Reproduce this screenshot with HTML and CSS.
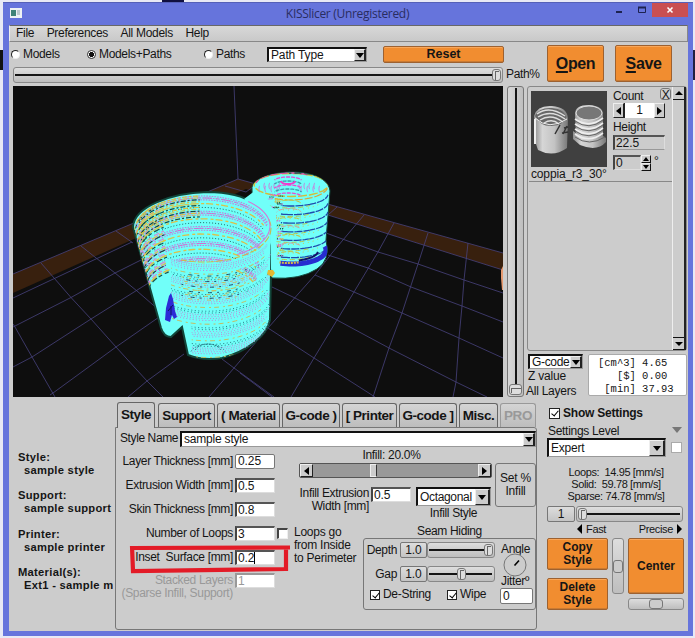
FILE: index.html
```html
<!DOCTYPE html>
<html lang="en">
<head>
<meta charset="utf-8">
<title>KISSlicer (Unregistered)</title>
<link rel="stylesheet" href="styles.css">
</head>
<body>
<div class="window">
  <header class="titlebar">
    <svg class="app-icon" width="12" height="10" viewBox="0 0 12 10"><rect width="12" height="10" fill="#eef2f4"/><rect x="1" y="2" width="5" height="6" fill="#3f8377"/><rect x="7" y="2" width="3" height="5" fill="#bcc8cc"/></svg>
    <span class="caption">KISSlicer (Unregistered)</span>
    <svg class="min" width="8" height="14"><path d="M0 9h6" stroke="#1d2350" stroke-width="2"/></svg>
    <svg class="max" width="9" height="14"><path d="M.5 4.500h7v5h-7z" fill="none" stroke="#1d2350"/><path d="M0 4.500h8" stroke="#1d2350" stroke-width="2"/></svg>
    <span class="close"><svg width="8" height="8"><path d="M1.500 1.500l5 5M6.500 1.500l-5 5" stroke="#fff" stroke-width="1.600"/></svg></span>
  </header>
  <div class="client">
    <nav class="menu"><span>File</span><span>Preferences</span><span>All Models</span><span>Help</span></nav>

    <div class="toolbar">
      <div class="view-tools">
        <div class="radios">
          <label class="r1"><i class="radio"></i>Models</label>
          <label class="r2"><i class="radio on"></i>Models+Paths</label>
          <label class="r3"><i class="radio"></i>Paths</label>
          <span class="select path-type"><b>Path Type</b><i class="drop"></i></span>
          <button class="orange reset">Reset</button>
        </div>
        <div class="path-row"><div class="track path-track"><i class="line"></i><i class="knob"></i></div><span>Path%</span></div>
      </div>
      <button class="orange big"><u>O</u>pen</button>
      <button class="orange big"><u>S</u>ave</button>
    </div>

    <div class="work">
      <svg class="viewport" width="490" height="311" viewBox="13 86 490 311">
        <defs>
          <clipPath id="big"><path d="M133 227C134 207 170 193 207 192Q238 192 255 204Q271 213 272 225L270 320C267 337 245 352 222 358Q203 361 188 355L182 327L171 337Q164 337 161 328Z"/></clipPath>
          <clipPath id="small"><path d="M252 189C251 180 268 173 290 172C315 172 329 180 330 191L326 240Q331 260 317 269Q300 280 272 278L253 240Z"/></clipPath>
        </defs>
        <rect x="13" y="86" width="490" height="311" fill="#0e0e0e"/>
        <path fill="#38200e" d="M13 274L238 179L503 253V270L246 189L13 293Z"/>
        <g class="grid">
          <path d="M234 86L238 179L13 274M238 179L503 253M13 298L132 242M13 327L71 297.5L115 273L145 258M13 367L32 357L91 319L150 282M50 395L53 393L116 347L162 315M128 397L147 381L184 354M209 397L234 368L268 328L299 293L315 275L332 253L364 215"/>
          <path d="M13 324L15 327L32 357L55 397M41 263L71 297.5L91 319L116 347L147 381L163 397M81 246L115 273L137 291L160 311M116 231L133 243M222 359L234 368L274 397M394 223L378 252L354 292L337 320L314 358L291 397M428 233L418 264L402 313L389 348L373 397M468 243L464 280L462 306L459 338L456 382L453 397M337 207L328 215"/>
          <path d="M328 215L503 270M326 233L378 252L418 264L464 280L503 293M328 255L368 268L411 287L462 306L503 322M315 275L354 292L402 313L459 338L503 358M272 287L295 298L337 320L389 348L456 382L487 397M268 328L314 358L375 397M240 373L272 397M225 186L246 192L257 184"/>
        </g>
        <path fill="#e69a70" d="M501 270l2-4v24h-1l-1-12z"/>
        <path d="M252 189C251 180 268 173 290 172C315 172 329 180 330 191L326 240Q331 260 317 269Q300 280 272 278L253 240Z" fill="#71fff9" stroke="#12463a"/>
        <g id="small-loops" clip-path="url(#small)"></g>
        <path d="M133 227C134 207 170 193 207 192Q238 192 255 204Q271 213 272 225L270 320C267 337 245 352 222 358Q203 361 188 355L182 327L171 337Q164 337 161 328Z" fill="#71fff9" stroke="#12463a" stroke-width="2"/>
        <path d="M244 199L256 190L276 212L277 268L271 270V225Z" fill="#71fff9"/>
        <g id="big-loops" clip-path="url(#big)"></g>
        <path d="M171 293l2 6 2 12 2 6-3 2-2-4-2 7-5-2 1-12 3-12z" fill="#2c2bd6"/><path d="M171 306v9M168 311l5-6" stroke="#0b1666"/>
        <path d="M268 270h5l2 3-3 4-5-3z" fill="#e2b832"/>
      </svg>

      <div class="track z-track"><i class="line"></i><i class="knob"></i></div>

      <aside class="side">
        <div class="models">
          <div class="model-card">
            <figure>
              <svg width="76" height="76" viewBox="0 0 76 76">
                <defs><linearGradient id="m"><stop stop-color="#8c8c8c"/><stop offset=".25" stop-color="#d6d6d6"/><stop offset=".6" stop-color="#c3c3c3"/><stop offset="1" stop-color="#777"/></linearGradient></defs>
                <rect width="76" height="76" fill="#404040"/>
                <path d="M3 25Q6 14 21 15Q36 16 37 27L36 57Q22 67 7 59L5 53H3z" fill="url(#m)"/>
                <path d="M4 25Q8 16 21 17Q34 18 35 27Q33 34 20 35Q9 35 4 25z" fill="#686868"/>
                <path d="M6 23Q18 14 34 25M7 26Q20 18 34 28M9 29Q20 22 32 31M13 32Q21 27 28 33" stroke="#dedede" fill="none" stroke-width="1.4"/>
                <path d="M4 27Q18 40 36 28" stroke="#eee" fill="none"/><path d="M24 43l5-9M32 43l4-8M33 37l4-1M31 42l6-1" stroke="#333" stroke-width="1.5"/><path d="M4 28v25" stroke="#eee" stroke-width="2"/>
                <path d="M44 23Q44 14 58 14Q72 15 72 23L72 45L75 47V51Q66 61 49 54L42 48V40l3 2z" fill="url(#m)"/>
                <ellipse cx="58" cy="22" rx="13" ry="7" fill="#777"/><ellipse cx="58" cy="22" rx="13" ry="7" fill="none" stroke="#ddd"/>
                <path d="M44 28Q58 38 72 27M44 33Q58 43 72 32M44 38Q58 48 72 37M44 43Q58 53 72 42" stroke="#eee" stroke-width="1.6" fill="none"/><path d="M44 30Q58 40 72 29M44 35Q58 45 72 34M44 40Q58 50 72 39M44 46Q58 56 74 46" stroke="#666" fill="none"/>
              </svg>
              <figcaption>coppia_r3_30°</figcaption>
            </figure>
            <div class="model-props">
              <div class="count-head">Count<span class="x">X</span></div>
              <div class="stepper"><i class="sq left"></i><b>1</b><i class="sq right"></i></div>
              <div class="height-label">Height</div>
              <div class="field dim h">22.5</div>
              <div class="rot"><span class="field dim">0</span><span class="ud"><i class="up"></i><i class="down"></i></span>°</div>
            </div>
          </div>
          <div class="vscroll"><i class="sb up"></i><i class="sb down"></i></div>
        </div>
        <div class="layer-info">
          <div class="layer-left"><span class="select gcode"><b>G-code</b><i class="drop"></i></span><span class="zv">Z value</span><span class="al">All Layers</span></div>
          <pre>[cm^3] 4.65
   [$] 0.00
 [min] 37.93</pre>
        </div>
      </aside>
    </div>

    <div class="settings">
      <dl class="summary">
        <dt>Style:</dt><dd>sample style</dd>
        <dt>Support:</dt><dd>sample support</dd>
        <dt>Printer:</dt><dd>sample printer</dd>
        <dt>Material(s):</dt><dd>Ext1 - sample ma</dd>
      </dl>

      <section class="tabset">
        <div class="tabs"><span class="t1 active">Style</span><span class="t2">Support</span><span class="t3">( Material</span><span class="t4">G-code )</span><span class="t5">[ Printer</span><span class="t6">G-code ]</span><span class="t7">Misc.</span><span class="t8 off">PRO</span></div>
        <div class="panel">
          <div class="name-row"><span>Style Name</span><span class="select style-name"><b>sample style</b><i class="drop"></i></span></div>
          <div class="panel-body">
            <div class="fields">
              <div class="row"><span>Layer Thickness [mm]</span><b class="field soft">0.25</b></div>
              <div class="row"><span>Extrusion Width [mm]</span><b class="field">0.5</b></div>
              <div class="row"><span>Skin Thickness [mm]</span><b class="field">0.8</b></div>
              <div class="row"><span>Number of Loops</span><b class="field">3</b><i class="check"></i></div>
              <div class="row inset"><span>Inset&nbsp; Surface [mm]</span><b class="field caret">0.2</b><svg class="mark" width="164" height="34"><path d="M162 4.500L3 5M4 3L5 28L158 26M158 5V28" fill="none" stroke="#e31b27" stroke-width="4.200"/></svg></div>
              <div class="row stacked"><span>Stacked Layers<br>(Sparse Infill, Support)</span><b class="field">1</b></div>
            </div>
            <div class="options">
              <div class="infill">
                <div class="infill-main">
                  <div class="infill-label">Infill: 20.0%</div>
                  <div class="hscroll"><i class="sq left"></i><i class="thumb"></i><i class="sq right"></i></div>
                  <div class="infill-row"><span class="iew">Infill Extrusion<br>Width [mm]</span><b class="field">0.5</b><span class="oct"><span class="select"><b>Octagonal</b><i class="drop"></i></span><em>Infill Style</em></span></div>
                </div>
                <button class="grey set">Set %<br>Infill</button>
              </div>
              <div class="lower">
                <div class="loops-go">Loops go<br>from Inside<br>to Perimeter</div>
                <div class="seam">
                  <div class="seam-title">Seam Hiding</div>
                  <div class="seam-box">
                    <div class="seam-left">
                      <div class="sl"><span>Depth</span><b class="val">1.0</b><div class="track depth"><i class="line"></i><i class="knob"></i></div></div>
                      <div class="sl"><span>Gap</span><b class="val">1.0</b><div class="track gap"><i class="line"></i><i class="knob"></i></div></div>
                      <div class="checks"><i class="check on"></i><span>De-String</span><i class="check on"></i><span>Wipe</span></div>
                    </div>
                    <div class="seam-right"><span>Angle</span><svg width="26" height="24"><circle cx="13" cy="12" r="11" fill="#ccc" stroke="#777"/><path d="M12.500 12.500l4.500-5" stroke="#000" stroke-width="1.600"/></svg><span>Jitterº</span><b class="field soft">0</b></div>
                  </div>
                </div>
              </div>
            </div>
          </div>
        </div>
      </section>

      <aside class="level">
        <div class="show"><i class="check on"></i>Show Settings</div>
        <div class="lv-head"><span>Settings Level</span><i></i></div>
        <div class="lv-row"><span class="select"><b>Expert</b><i class="drop"></i></span><i class="check flat"></i></div>
        <div class="speeds">Loops:&nbsp; 14.95 [mm/s]<br>Solid:&nbsp; 59.78 [mm/s]<br>Sparse: 74.78 [mm/s]</div>
        <div class="speed-row"><b class="val">1</b><div class="track"><i class="line"></i><i class="knob"></i></div></div>
        <div class="fp"><i class="tl"></i><span>Fast</span><span class="pr">Precise</span><i class="tr"></i></div>
        <div class="actions">
          <div class="col"><button class="orange">Copy<br>Style</button><button class="orange">Delete<br>Style</button></div>
          <div class="roll v"><i></i></div>
          <div class="col"><button class="orange center">Center</button><div class="roll h"><i></i></div></div>
        </div>
      </aside>
    </div>
  </div>
</div>
<script src="script.js"></script>
</body>
</html>
```
FILE: styles.css
```css
* { box-sizing: border-box; }
html { overflow: hidden; }
body {
  margin: 0; width: 695px; height: 638px; padding: 2px 2px 2px 3px; overflow: hidden; color: #151515;
  background:
    linear-gradient(#111, #111) 0 50px / 3px 20px no-repeat,
    linear-gradient(#101040, #101040) 162px 0 / 22px 2px no-repeat,
    linear-gradient(#202040, #202040) 693px 50px / 2px 30px no-repeat,
    #e8e9f5;
  font: 12px/13px "Liberation Sans", Arial, sans-serif; letter-spacing: -.33px; white-space: nowrap;
}
b, i, em { font-weight: normal; font-style: normal; display: block; }
.window { width: 690px; height: 634px; background: #6674dc; padding: 0 5px 0 6px; border-top: 1px solid #5560b8; }
.titlebar { height: 22px; display: flex; align-items: flex-start; }
.app-icon { margin: 5px 0 0 1px; }
.caption { width: 603px; margin-left: -1px; padding: 3px 0 0 50px; text-align: center; font: 12px/15px "Open Sans", sans-serif; letter-spacing: -.3px; color: #292d61; }
.caption + .min { margin-left: -8px; }
.max { margin-left: 14px; }
.close { width: 36px; height: 14px; margin-left: auto; background: #c94f52; display: flex; align-items: center; justify-content: center; }
.titlebar svg { flex: none; }
.client { height: 606px; background: #ccc; }
.menu { height: 17px; border: 1px solid #888; border-top-color: #686868; border-left-color: #eee; background: linear-gradient(#d8d8d8, #c9c9c9); padding-left: 6px; display: flex; gap: 12.5px; line-height: 15px; letter-spacing: -.3px; }

.toolbar { height: 44px; display: flex; align-items: flex-start; }
.view-tools { width: 538px; flex: none; }
.radios { display: flex; align-items: center; height: 24px; padding-top: 1px; }
.radios label { display: flex; align-items: center; gap: 3px; padding-left: 1px; }
.r1 { width: 76px; } .r2 { width: 117px; } .r3 { width: 57px; }
.radio { width: 9px; height: 9px; border-radius: 50%; background: #fff; border: 1px solid #222; border-right-color: #eee; border-bottom-color: #eee; margin-left: 1px; }
.radio.on { background: radial-gradient(#111 45%, #fff 55%); border: 1px solid #333; }
.select { display: flex; justify-content: space-between; background: #fff; border: 1px solid #333; border-width: 2px 1px 1px 2px; border-color: #111 #999 #999 #111; height: 16px; padding-left: 3px; line-height: 13px; }
.drop { width: 12px; background: #ccc; border: 1px solid #eee; border-right: 2px solid #222; border-bottom: 1px solid #222; display: flex; align-items: center; justify-content: center; }
.drop::before { content: ""; border: 4px solid transparent; border-top: 5px solid #000; border-bottom: 0; }
.path-type { width: 100px; margin-left: 8px; height: 15px; line-height: 12px; padding-left: 2px; letter-spacing: -.15px; }
button { font: bold 12px/13px "Liberation Sans", Arial, sans-serif; padding: 0; color: #151515; }
.orange { background: #f18d30; border: 1px solid #9d6130; border-radius: 2px; box-shadow: inset 0 1px #f9a75a, inset 0 -1px #c97a32; }
.reset { width: 121px; height: 17px; margin-left: 16px; font-size: 12.5px; }
.path-row { display: flex; align-items: center; height: 17px; gap: 3px; padding-left: 4px; }
.track { position: relative; height: 16px; border: 1px solid #888; border-radius: 3px; background: linear-gradient(#dedede, #bdbdbd); flex: none; }
.track .line { position: absolute; left: 1px; right: 2px; top: 6px; height: 2px; background: #151515; }
.track .knob { position: absolute; top: 1px; width: 9px; height: 12px; border: 1px solid #777; border-radius: 3px; background: #ddd; }
.track .knob::after { content: ""; position: absolute; left: 2px; top: 1px; width: 3px; height: 8px; border: 1px solid #666; border-width: 1px 0 0 1px; }
.path-track { width: 490px; }
.path-track .knob { right: 1px; }
.big { width: 57px; height: 37px; margin-top: 3px; font-size: 16px; letter-spacing: -.4px; flex: none; }
.big + .big { margin-left: 11px; }
.big u { text-decoration-thickness: 2px; text-underline-offset: 2px; }

.work { display: flex; height: 312px; padding-left: 4px; }
.viewport { flex: none; display: block; }
.grid path { fill: none; stroke: #47427d; stroke-width: .8; }
.work .z-track { width: 17px; height: 311px; margin: 0 3px 0 4px; border-color: #777; background: linear-gradient(90deg, #d8d8d8, #bebebe); }
.z-track .line { left: 7px; right: auto; width: 2px; top: 1px; bottom: 10px; height: auto; }
.z-track .knob { top: auto; bottom: 1px; left: 1px; width: 13px; height: 11px; }
.z-track .knob::after { width: 9px; height: 4px; left: 1px; top: 3px; }
.side { width: 160px; flex: none; }
.models { height: 265px; border: 1px solid #888; border-radius: 3px; display: flex; justify-content: space-between; padding-left: 1px; }
.model-card { width: 143px; height: 95px; border-bottom: 1px solid #888; display: flex; padding: 4px 0 0 2px; }
figure { margin: 0; width: 82px; }
figure svg { display: block; }
figcaption { line-height: 15px; letter-spacing: -.15px; }
.count-head { display: flex; height: 12px; width: 58px; justify-content: space-between; line-height: 11px; }
.x { width: 11px; height: 12px; margin: -3px 0 0; border: 1px solid #777; border-radius: 3px; text-align: center; line-height: 12px; }
.stepper { display: flex; width: 52px; height: 15px; }
.stepper b { flex: 1; background: #fff; text-align: center; line-height: 15px; border-left: 1px solid #222; }
.sq { width: 11px; flex: none; border: 1px solid #eee; border-right-color: #222; border-bottom-color: #222; background: #ccc; display: flex; align-items: center; justify-content: center; }
.sq::before { content: ""; border: 4px solid transparent; }
.sq.left::before { border-right: 5px solid #000; border-left: 0; }
.sq.right::before { border-left: 5px solid #000; border-right: 0; }
.height-label { line-height: 16px; margin-top: 1px; letter-spacing: -.3px; }
.field { background: #fff; border: 1px solid #ddd; border-top: 2px solid #555; border-left: 2px solid #444; width: 40px; height: 15px; line-height: 12px; padding-left: 1px; flex: none; letter-spacing: -.1px; }
.field.soft { border: 1px solid #777; border-radius: 2px; padding-left: 2px; line-height: 13px; }
.field.dim { background: #ccc; }
.field.h { width: 52px; border-bottom-color: #999; }
.rot { display: flex; margin-top: 5px; }
.rot .field { width: 28px; }
.ud { width: 10px; height: 16px; display: flex; flex-direction: column; margin-right: 3px; }
.ud i { flex: 1; border: 1px solid #eee; border-right-color: #111; border-bottom-color: #111; display: flex; align-items: center; justify-content: center; }
.up::before { content: ""; border: 3px solid transparent; border-bottom: 4px solid #000; border-top: 0; }
.down::before { content: ""; border: 3px solid transparent; border-top: 4px solid #000; border-bottom: 0; }
.vscroll { width: 14px; border-left: 1px solid #eee; border-right: 2px solid #222; display: flex; flex-direction: column; justify-content: space-between; }
.sb { height: 13px; border-bottom: 1px solid #111; display: flex; align-items: center; justify-content: center; }
.sb.down { border-top: 1px solid #111; }
.sb::before { border-left-width: 4px; border-right-width: 4px; }
.layer-info { display: flex; justify-content: space-between; margin-top: 3px; height: 43px; }
.layer-left { width: 60px; display: flex; flex-direction: column; }
.gcode { width: 55px; height: 15px; margin: 0 0 1px 1px; line-height: 12px; padding-left: 2px; }
.zv { line-height: 13px; padding-left: 1px; letter-spacing: -.2px; } .al { line-height: 16px; margin-left: -1px; letter-spacing: -.25px; }
pre { margin: 0; width: 99px; height: 42px; border: 1px solid #aaa; border-radius: 2px; background: #fff; padding: 2px 0 0 9px; font: 10.5px/13px "Liberation Mono", monospace; letter-spacing: 0; }

.settings { display: flex; height: 232px; }
.summary { width: 104px; margin: 0; padding: 53px 0 0 9px; overflow: hidden; font-weight: bold; font-size: 11.2px; letter-spacing: .28px; height: 232px; }
.summary dd { margin: 0 0 12.4px 6px; }
.tabset { width: 424px; flex: none; padding: 4px 0 0 2px; }
.tabs { display: flex; height: 25px; padding-left: 2px; font-weight: bold; font-size: 13.5px; letter-spacing: -.45px; align-items: flex-end; }
.tabs span { height: 24px; border: 1px solid #666; border-bottom: 0; border-radius: 3px 3px 0 0; background: linear-gradient(#d4d4d4, #bdbdbd); text-align: center; line-height: 24px; flex: none; }
.tabs .active { height: 26px; margin-bottom: -1px; background: #ccc; position: relative; }
.tabs .off { color: #999; border-color: #999; }
.t1 { width: 38px; } .t2 { width: 57px; margin-left: 3px; } .t3 { width: 63px; margin-left: 2px; } .t4 { width: 58px; margin-left: 2px; } .t5 { width: 55px; margin-left: 2px; } .t6 { width: 58px; margin-left: 2px; } .t7 { width: 39px; margin-left: 2px; } .t8 { width: 36px; margin-left: 2px; }
.panel { height: 203px; border: 1px solid #777; border-radius: 0 3px 3px 3px; padding-top: 2px; }
.name-row { display: flex; align-items: center; gap: 3px; padding-left: 4px; height: 17px; }
.style-name { width: 356px; line-height: 12px; padding-left: 2px; letter-spacing: -.2px; }
.name-row > span:first-child { width: 57px; letter-spacing: -.4px; }
.panel-body { display: flex; padding-top: 2px; }
.fields { width: 176px; flex: none; }
.row { display: flex; height: 24px; align-items: center; position: relative; }
.row > span { width: 117px; margin-right: 2px; text-align: right; }
.check { width: 11px; height: 11px; flex: none; background: #fff; border: 1px solid #eee; border-top: 2px solid #444; border-left: 2px solid #444; }
.row .check { margin-left: 2px; }
.check.on { position: relative; border: 1px solid #222; }
.check.on::after { content: ""; position: absolute; left: 3px; top: 0; width: 3px; height: 6px; border: solid #000; border-width: 0 1.5px 1.5px 0; transform: rotate(40deg); }
.check.flat { border: 1px solid #aaa; }
.caret::after { content: ""; display: inline-block; width: 1px; height: 12px; background: #000; vertical-align: -2px; }
.mark { position: absolute; left: 12px; top: -2px; }
.stacked { color: #999; height: 34px; align-items: flex-start; padding-top: 5px; }
.stacked .field { margin-top: -1px; border-color: #999 #ddd #ddd #999; }
.options { width: 244px; flex: none; padding-top: 1px; }
.infill { display: flex; height: 71px; padding-left: 7px; gap: 3px; }
.infill-main { width: 193px; flex: none; }
.infill-label { text-align: center; padding-right: 8px; height: 13px; line-height: 11px; letter-spacing: -.3px; }
.hscroll { height: 15px; background: #999; border: 1px solid #555; border-radius: 2px; display: flex; justify-content: space-between; }
.hscroll .sq { width: 13px; }
.thumb { width: 7px; margin-right: 101px; margin-left: auto; background: #ccc; border: 1px solid #eee; border-right-color: #333; }
.infill-row { display: flex; margin-top: 9px; align-items: flex-start; }
.iew { width: 70px; text-align: right; margin-right: 2px; }
.oct { margin-left: 5px; width: 75px; }
.oct .select { height: 19px; line-height: 16px; padding-left: 2px; }
.oct .drop { width: 15px; }
.oct em { text-align: center; line-height: 14px; }
.grey { background: #ccc; border: 1px solid #777; border-radius: 3px; font-weight: normal; letter-spacing: -.2px; }
.set { width: 41px; height: 44px; margin-top: 13px; }
.lower { display: flex; justify-content: space-between; }
.loops-go { padding: 5px 0 0 2px; letter-spacing: -.25px; }
.seam { width: 173px; margin-top: 3px; }
.seam-title { text-align: center; line-height: 14px; letter-spacing: -.35px; }
.seam-box { height: 72px; border: 1px solid #777; border-radius: 3px; display: flex; }
.seam-left { width: 133px; padding-top: 3px; flex: none; }
.sl { height: 16px; margin-bottom: 8px; display: flex; align-items: center; }
.sl > span { width: 33px; text-align: right; margin-right: 3px; }
.val { width: 27px; height: 16px; border: 1px solid #777; border-radius: 2px; text-align: center; line-height: 14px; letter-spacing: -.1px; background: linear-gradient(#ddd, #c4c4c4); flex: none; }
.sl .track { width: 68px; }
.depth .knob { right: 1px; } .gap .knob { left: 29px; }
.checks { display: flex; align-items: center; margin-top: -2px; padding-left: 6px; }
.checks .check { width: 10px; height: 10px; }
.checks span { width: 48px; margin-left: 3px; letter-spacing: -.3px; } .checks span + .check { margin-left: 16px; } .checks span:last-child { width: auto; }
.seam-right { padding: 4px 0 0 1px; display: flex; flex-direction: column; align-items: flex-start; width: 36px; flex: none; }
.seam-right > svg { margin: -2px 0 -2px 4px; flex: none; }
.seam-right > span { margin-left: 3px; line-height: 12px; flex: none; }
.seam-right .field { width: 33px; height: 16px; margin-top: 1px; margin-left: 2px; line-height: 14px; }

.level { width: 138px; flex: none; margin-left: 10px; }
.show { display: flex; align-items: center; gap: 3px; font-weight: bold; height: 21px; padding: 10px 0 0 2px; letter-spacing: -.22px; }
.lv-head { display: flex; justify-content: space-between; align-items: center; height: 19px; padding: 5px 3px 0 1px; letter-spacing: -.3px; }
.lv-head i { border: 5px solid transparent; border-top: 6px solid #777; border-bottom: 0; margin-top: -2px; }
.lv-row { display: flex; align-items: center; justify-content: space-between; padding-right: 3px; }
.lv-row .select { width: 119px; height: 19px; line-height: 16px; padding-left: 2px; letter-spacing: -.2px; }
.lv-row .drop { width: 16px; }
.speeds { text-align: center; font-size: 11px; line-height: 12px; margin-top: 9px; height: 36px; letter-spacing: -.38px; }
.speed-row { display: flex; gap: 1px; margin-top: 4px; }
.speed-row .val { width: 28px; } .speed-row .track { width: 107px; }
.speed-row .knob { left: 1px; }
.fp { display: flex; align-items: center; height: 14px; padding: 0 3px 0 30px; gap: 4px; font-size: 11px; margin-bottom: 2px; }
.fp .pr { margin-left: auto; }
.tl { border: 5px solid transparent; border-right-color: #000; border-left: 0; } .tr { border: 5px solid transparent; border-left-color: #000; border-right: 0; }
.actions { display: flex; gap: 4px; }
.col { display: flex; flex-direction: column; gap: 8px; }
.col .orange { width: 61px; height: 32px; }
.col .center { width: 56px; height: 56px; }
.col:last-child { gap: 4px; }
.roll { border: 1px solid #888; border-radius: 3px; background: linear-gradient(#ddd, #bebebe); display: flex; align-items: center; justify-content: center; }
.roll i { width: 10px; height: 13px; border: 1px solid #777; border-radius: 3px; background: #ccc; }
.roll.v { width: 12px; height: 56px; } .roll.h { width: 56px; height: 12px; } .roll.h i { width: 14px; height: 10px; }
```
FILE: script.js
```js
// Draws the extruder loops of both models as dashed elliptical arcs.
let seed = 7;
const rnd = () => (seed = (seed * 16807) % 2147483647) / 2147483647;
const NS = "http://www.w3.org/2000/svg";

function arc(parent, cx, cy, rx, ry, from, to, color, dash, width) {
  const p = document.createElementNS(NS, "path");
  let d = "";
  for (let i = 0; i <= 24; i++) {
    const a = (from + (to - from) * i / 24) * Math.PI / 180;
    d += (i ? "L" : "M") + (cx + rx * Math.cos(a)).toFixed(1) + " " + (cy - ry * Math.sin(a)).toFixed(1);
  }
  p.setAttribute("d", d);
  p.setAttribute("fill", "none");
  p.setAttribute("stroke", color);
  p.setAttribute("stroke-width", width || 1);
  p.setAttribute("stroke-dashoffset", (rnd() * 9).toFixed(1));
  if (dash) p.setAttribute("stroke-dasharray", dash);
  parent.appendChild(p);
}

const big = document.getElementById("big-loops");
// inner wall, in bands of equal tint
for (let k = 0; k < 38; k++) {
  const y = 230 + k * 1.7, rx = 67 - k * 0.35, ry = 34 - k * 0.2;
  const phase = k % 8;
  if (phase < 3) arc(big, 202, y, rx, ry, 172, 12, "#c579dc", "1.5 1.2", 1.1);
  else if (phase === 4) arc(big, 202, y, rx, ry, 178, 20, "#dcc04a", "7 3 3 2", 1.3);
  else if (phase === 6) arc(big, 202, y, rx, ry, 178, 20, "#1f6b66", "1 2", 1);
  if (phase === 1) arc(big, 202, y, rx, ry, 160, 25, "#cf70d4", "9 4 3 3", 1);
  arc(big, 202, y, rx, ry, 180, 128, ["#dcc546", "#1b5147", "#71fff9", "#d68ad0"][k % 4], "6 2 4 3", 1.2);
  if (k < 12) arc(big, 202, y, rx, ry, 165, 92, ["#e0bf3c", "#cfc95a", "#164c42"][k % 3], "5 2 2 2", 1.2);
}
// the front wall hides the lower inner loops
for (let k = 0; k < 9; k++) arc(big, 204, 232 + k, 66, 33, -3, -125, "#71fff9", "", 2);
arc(big, 204, 228, 67, 34, 15, -110, "#cdbc4c", "7 2", 1.1);
arc(big, 204, 226, 66, 33, 48, -60, "#d17bd6", "", 1.1);
for (let k = 0; k < 56; k++) {
  const y = 233 + k * 1.85, phase = k % 9;
  const from = -6 - rnd() * 22, to = k > 33 ? -105 : -126;
  if (phase < 4) arc(big, 208, y, 63, 32, from, to, "#bb8cd8", "1 " + (1.4 + rnd()).toFixed(1), 1);
  else if (phase === 5) arc(big, 208, y, 63, 32, from - 15, to, "#c6bd62", "5 3 2 4", 1);
  else if (phase > 6) arc(big, 208, y, 63, 32, from, to, "#2c7d88", "1 2.5", 1);
  if (k > 5 && k < 20) arc(big, 208, y, 63, 32, -40 - rnd() * 20, -115, k % 3 ? "#c9bc63" : "#1f4f68", "4 8 2 5", 1);
}
// left edge of the opening
for (let k = 0; k < 18; k++) {
  arc(big, 168, 250 + k * 5, 30, 34, 172, 128, ["#ddc73d", "#d879ce", "#1b695a"][k % 3], "4 2 2 3", 1);
}
arc(big, 208, 352, 13, 8, 165, 15, "#186a70", "1 1", 1);
arc(big, 208, 355, 18, 11, 165, 15, "#286a80", "1 2", 1);

const small = document.getElementById("small-loops");
arc(small, 291, 185, 37, 11.5, 0, 360, "#d5bd38", "9 2", 1.4);
arc(small, 290, 184, 34, 11, 175, 55, "#db4f9d", "8 2", 1.4);
arc(small, 295, 184, 35, 11, 100, 15, "#1c574e", "7 3", 1.3);
for (let i = -5; i <= 5; i++) {
  if (Math.abs(i) < 2) continue;
  for (let j = 0; j < 2; j++) arc(small, 290 + i * (5 + j), 186 + j * 3, 1, 3, 90, 270, "#cf74d8", "", 1);
}
for (let k = 0; k < 5; k++) arc(small, 288, 181 + k * 4, 14, 4, 165, 15, k % 2 ? "#3c9aab" : "#e94bcf", "4 1", 1.3);
arc(small, 288, 181, 7, 3, 0, -180, "#f03ccc", "", 2);
arc(small, 291, 186, 37, 14, -10, -120, "#d9a53c", "8 2", 1.2);
for (let k = 0; k < 7; k++) {
  const y = 194 + k * 8.6;
  arc(small, 292, y, 36, 12, -4, -108, "#204bac", "12 1 8 1", 1.3);
  arc(small, 289, y + 3, 33, 11, -50, -135, "#b7c449", "5 3", 1);
  arc(small, 289, y + 5, 34, 11, -25, -115, "#d3c44b", "1 4", 1);
  arc(small, 289, y + 11, 13, 5, 165, 15, k % 2 ? "#d49b9c" : "#c5c13d", "5 2", 1);
}
arc(small, 292, 250, 34, 14, 15, -110, "#272dd0", "", 5);
arc(small, 289, 251, 29, 10, -5, -70, "#111269", "", 2);
arc(small, 289, 253, 28, 10, -70, -110, "#d3bd47", "2 1", 2);
for (let i = 0; i < 46; i++) {
  const x = 270 + rnd() * 12, y = 193 + rnd() * 66;
  arc(small, x, y, 2, 0.5, 0, 180, ["#d95ccd", "#d7bc3d", "#11624f"][i % 3], "1 1", 1.4);
}
```
